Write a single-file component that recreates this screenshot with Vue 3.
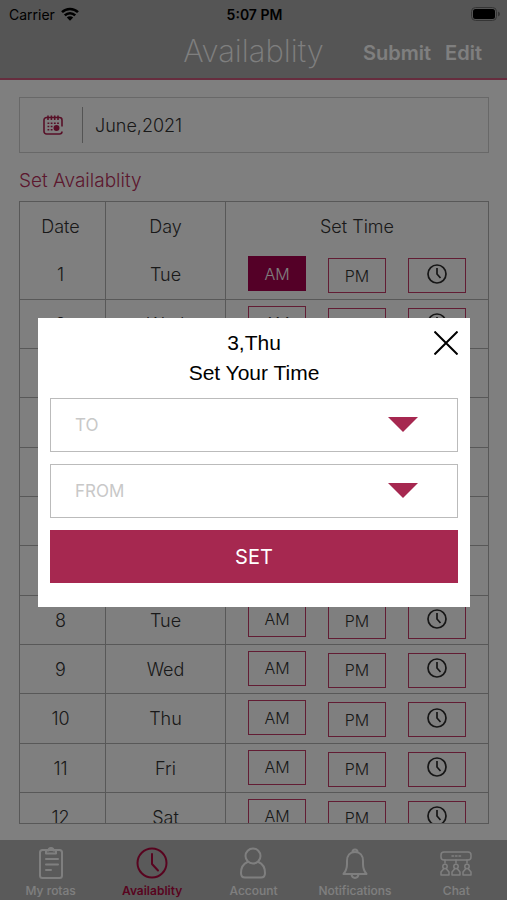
<script setup>
import { ref } from 'vue'

const names = ['Tue', 'Wed', 'Thu', 'Fri', 'Sat', 'Sun', 'Mon']
const days = Array.from({ length: 12 }, (_, i) => ({
  date: i + 1,
  day: names[i % 7],
  am: i === 0
}))

const month = ref('June,2021')
const open = ref(true)
const to = ref('')
const from = ref('')
const hours = ['08:00', '12:00', '16:00', '20:00']
</script>

<template>
  <div class="app">
    <header class="top">
      <div class="status">
        <div class="carrier">
          <span>Carrier</span>
          <svg class="wifi" viewBox="0 0 18 14" aria-hidden="true">
            <path d="M1 5.200a11.300 11.300 0 0 1 16 0M3.800 8.400a7.300 7.300 0 0 1 10.400 0" fill="none" stroke="#000" stroke-width="2.500" />
            <path d="M9 13.800 5.800 10.600a4.500 4.500 0 0 1 6.400 0z" />
          </svg>
        </div>
        <strong class="clock">5:07 PM</strong>
        <svg class="battery" viewBox="0 0 29 14" aria-hidden="true">
          <rect x="0.5" y="0.5" width="25" height="13" rx="4" fill="none" stroke="#6a6a6a" />
          <rect x="2" y="2" width="22" height="10" rx="2.5" />
          <path d="M27 4.500q2 .8 2 2.500t-2 2.500z" fill="#6a6a6a" />
        </svg>
      </div>
      <div class="titlebar">
        <h1>Availablity</h1>
        <div class="actions">
          <button type="button">Submit</button>
          <button type="button">Edit</button>
        </div>
      </div>
    </header>

    <main class="content">
      <label class="month">
        <span class="month-icon">
          <svg viewBox="0 0 20 20" fill="none" stroke="#b0204f" stroke-width="1.600" aria-label="Month">
            <path d="M19 11.500V5a2.500 2.500 0 0 0-2.500-2.500h-13A2.500 2.500 0 0 0 1 5v11.500A2.500 2.500 0 0 0 3.500 19h13a2.500 2.500 0 0 0 2.500-2.500M5 .5V5M8.400 .5V5M11.700 .5V5M15 .5V5" />
            <path d="M4.500 8.300h12M4.500 11.500h6M4.500 14.700h6" stroke-dasharray="1.800 1.400" />
            <circle cx="13.500" cy="13" r="2.200" fill="#b0204f" />
          </svg>
        </span>
        <input v-model="month" type="text" readonly />
      </label>

      <h2>Set Availablity</h2>

      <div class="sheet">
        <table>
          <colgroup>
            <col class="c-date" />
            <col class="c-day" />
            <col />
          </colgroup>
          <thead>
            <tr><th>Date</th><th>Day</th><th>Set Time</th></tr>
          </thead>
          <tbody>
            <tr v-for="d in days" :key="d.date">
              <td>{{ d.date }}</td>
              <td>{{ d.day }}</td>
              <td>
                <div class="slots">
                  <button type="button" class="slot am" :class="{ chosen: d.am }">AM</button>
                  <button type="button" class="slot">PM</button>
                  <button type="button" class="slot timer" aria-label="Choose time" @click="open = true">
                    <svg viewBox="0 0 20 20" fill="none" stroke="#2c2c2c" stroke-width="1.700">
                      <circle cx="10" cy="10" r="9" />
                      <path d="M10 4v6l3.500 4" />
                    </svg>
                  </button>
                </div>
              </td>
            </tr>
          </tbody>
        </table>
      </div>
    </main>

    <nav class="tabs">
      <a href="#rotas">
        <svg viewBox="0 0 32 32">
          <rect x="5" y="3" width="22" height="28" rx="2.500" />
          <path d="M11 3.500h2.500a2.500 2.500 0 0 1 5 0H21v3H11zM11 12h12M11 17.500h12M11 23h5" />
        </svg>
        <span>My rotas</span>
      </a>
      <a href="#availability" class="active">
        <svg viewBox="0 0 32 32">
          <circle cx="16" cy="16" r="14.500" />
          <path d="M16 7v10l6 6.500" />
        </svg>
        <span>Availablity</span>
      </a>
      <a href="#account">
        <svg viewBox="0 0 32 32">
          <circle cx="16" cy="9" r="7.500" />
          <path d="M10.500 15C6 17 4 21 4 26q0 4.500 4 4.500h16q4 0 4-4.500c0-5-2-9-6.500-11" />
        </svg>
        <span>Account</span>
      </a>
      <a href="#notifications">
        <svg viewBox="0 0 32 32">
          <path d="M13.500 5a2.500 2.500 0 1 1 5 0M4.500 27C7 24 8 22 8 17v-3c0-5.500 3-9 8-9s8 3.500 8 9v3c0 5 1 7 3.500 10zM12.500 27.500c.5 4.500 6.500 4.500 7 0" />
        </svg>
        <span>Notifications</span>
      </a>
      <a href="#chat">
        <svg viewBox="0 0 32 32" class="thin">
          <rect x="1" y="5" width="30" height="8" rx="3" />
          <path d="M5 13v3M16 13v3M27 13v3M12 9h1.500M15.500 9H17M19 9h1.500" />
          <circle cx="5" cy="19.500" r="2.200" /><circle cx="16" cy="19.500" r="2.200" /><circle cx="27" cy="19.500" r="2.200" />
          <path d="M3.500 22 1 25v3h8v-3l-2.500-3M14.500 22 12 25v3h8v-3l-2.500-3M25.500 22 23 25v3h8v-3l-2.500-3" />
        </svg>
        <span>Chat</span>
      </a>
    </nav>

    <div v-if="open" class="backdrop">
      <form class="dialog" role="dialog" aria-labelledby="dialog-title" @submit.prevent="open = false">
        <button type="button" class="close" aria-label="Close" @click="open = false">
          <svg viewBox="0 0 24 24" fill="none" stroke="#000" stroke-width="2">
            <path d="M.5 .5l23 23M23.500 .5l-23 23" />
          </svg>
        </button>
        <div id="dialog-title" class="heading">
          <p>3,Thu</p>
          <p>Set Your Time</p>
        </div>
        <div class="field">
          <select v-model="to" aria-label="To">
            <option value="">TO</option>
            <option v-for="h in hours" :key="h">{{ h }}</option>
          </select>
          <svg viewBox="0 0 30 15" aria-hidden="true"><path d="M0 0h30L15 15z" /></svg>
        </div>
        <div class="field">
          <select v-model="from" aria-label="From">
            <option value="">FROM</option>
            <option v-for="h in hours" :key="h">{{ h }}</option>
          </select>
          <svg viewBox="0 0 30 15" aria-hidden="true"><path d="M0 0h30L15 15z" /></svg>
        </div>
        <button type="submit" class="set">SET</button>
      </form>
    </div>
  </div>
</template>

<style>
body {
  margin: 0;
}
</style>

<style scoped>
.app,
.app * {
  box-sizing: border-box;
}
.app {
  display: flex;
  flex-direction: column;
  height: 100vh;
  background: #fff;
  color: #333;
  font-family: Inter, "Liberation Sans", sans-serif;
}
button,
input,
select {
  font: inherit;
  color: inherit;
  border: 0;
  border-radius: 0;
  padding: 0;
  margin: 0;
  background: none;
}
h1,
h2,
p {
  margin: 0;
}
svg {
  display: block;
}

.top {
  flex: none;
  background: #aaa;
  border-bottom: 2px solid #cc5a7c;
}
.status {
  display: grid;
  grid-template-columns: 1fr auto 1fr;
  align-items: center;
  height: 28px;
  padding: 0 7px 0 9px;
  color: #000;
  font-size: 14px;
}
.carrier {
  display: flex;
  align-items: center;
  gap: 6px;
}
.wifi {
  width: 18px;
  height: 14px;
}
.clock {
  font-weight: 600;
}
.battery {
  justify-self: end;
  width: 29px;
  height: 14px;
}
.titlebar {
  display: grid;
  grid-template-columns: 1fr auto 1fr;
  align-items: center;
  height: 50px;
  padding: 0 25px;
  color: #fff;
}
h1 {
  grid-column: 2;
  padding-bottom: 4px;
  font-size: 31px;
  font-weight: 200;
  line-height: 40px;
}
.actions {
  display: flex;
  justify-content: flex-end;
  gap: 14px;
  font-size: 20px;
  font-weight: 600;
}

.content {
  flex: 1;
  min-height: 0;
  display: flex;
  flex-direction: column;
  padding: 17px 18px 16px 19px;
}
.month {
  flex: none;
  display: flex;
  align-items: center;
  height: 56px;
  border: 1px solid #d0d0d0;
}
.month-icon {
  flex: none;
  display: flex;
  align-items: center;
  width: 63px;
  height: 36px;
  padding-left: 23px;
  border-right: 1px solid #a8a8a8;
}
.month-icon svg {
  width: 20px;
  height: 20px;
}
.month input {
  flex: 1;
  min-width: 0;
  padding-left: 12px;
  font-size: 18px;
  font-weight: 300;
}
h2 {
  flex: none;
  padding-top: 8px;
  color: #b8305c;
  font-size: 19px;
  font-weight: 300;
  line-height: 40px;
}

.sheet {
  flex: 1;
  min-height: 0;
  overflow: hidden;
  border: 1px solid #b0b0b0;
}
table {
  width: 100%;
  table-layout: fixed;
  border-collapse: separate;
  border-spacing: 0;
  font-size: 18px;
}
.c-date {
  width: 86px;
}
.c-day {
  width: 120px;
}
th,
td {
  padding: 0;
  font-weight: 300;
  text-align: center;
  vertical-align: middle;
  border-right: 1px solid #b0b0b0;
}
th:first-child,
td:first-child {
  padding-right: 4px;
}
th:last-child,
td:last-child {
  border-right: 0;
}
th {
  height: 48px;
}
td {
  height: 49px;
  border-bottom: 1px solid #b0b0b0;
}
tbody tr:nth-child(3n + 1) td {
  height: 50px;
}
.slots {
  display: flex;
  justify-content: center;
  align-items: flex-end;
  gap: 22px;
  height: 37px;
}
.slot {
  display: flex;
  align-items: center;
  justify-content: center;
  width: 58px;
  height: 35px;
  border: 1px solid #c43a68;
  font-size: 16px;
}
.slot.am {
  align-self: flex-start;
}
.slot.chosen {
  background: #a8004f;
  border-color: #a8004f;
  color: #fff;
}
.slot.timer {
  padding-bottom: 4px;
}
.slot svg {
  width: 20px;
  height: 20px;
}

.tabs {
  flex: none;
  display: grid;
  grid-template-columns: repeat(5, 1fr);
  height: 60px;
  padding-top: 7px;
  background: #b5b5b5;
}
.tabs a {
  display: flex;
  flex-direction: column;
  align-items: center;
  gap: 4px;
  color: #fff;
  font-size: 12px;
  font-weight: 500;
  line-height: 16px;
  text-decoration: none;
}
.tabs a.active {
  color: #b0083f;
  font-weight: 600;
}
.tabs svg {
  width: 32px;
  height: 32px;
  fill: none;
  stroke: currentColor;
  stroke-width: 2;
  stroke-linecap: round;
  stroke-linejoin: round;
}
.tabs .thin {
  stroke-width: 1.5;
}

.backdrop {
  position: fixed;
  inset: 0;
  display: flex;
  align-items: center;
  padding: 25px 37px 0 38px;
  background: rgba(0, 0, 0, 0.5);
}
.dialog {
  position: relative;
  flex: 1;
  display: flex;
  flex-direction: column;
  padding: 10px 12px 24px;
  background: #fff;
  color: #000;
}
.heading {
  padding-bottom: 10px;
  font-family: "Liberation Sans", Arial, sans-serif;
  font-size: 21px;
  line-height: 30px;
  text-align: center;
}
.close {
  position: absolute;
  top: 13px;
  right: 12px;
  width: 24px;
  height: 24px;
}
.field {
  position: relative;
  margin-bottom: 12px;
}
.field select {
  display: block;
  width: 100%;
  height: 54px;
  padding: 0 80px 0 24px;
  appearance: none;
  background: #fff;
  border: 1px solid #bbb;
  color: #c8c8c8;
  font-size: 17px;
}
.field svg {
  position: absolute;
  top: 19px;
  right: 40px;
  width: 30px;
  height: 15px;
  fill: #a62850;
  pointer-events: none;
}
.set {
  height: 53px;
  background: #a62850;
  color: #fff;
  font-size: 20px;
}
</style>
